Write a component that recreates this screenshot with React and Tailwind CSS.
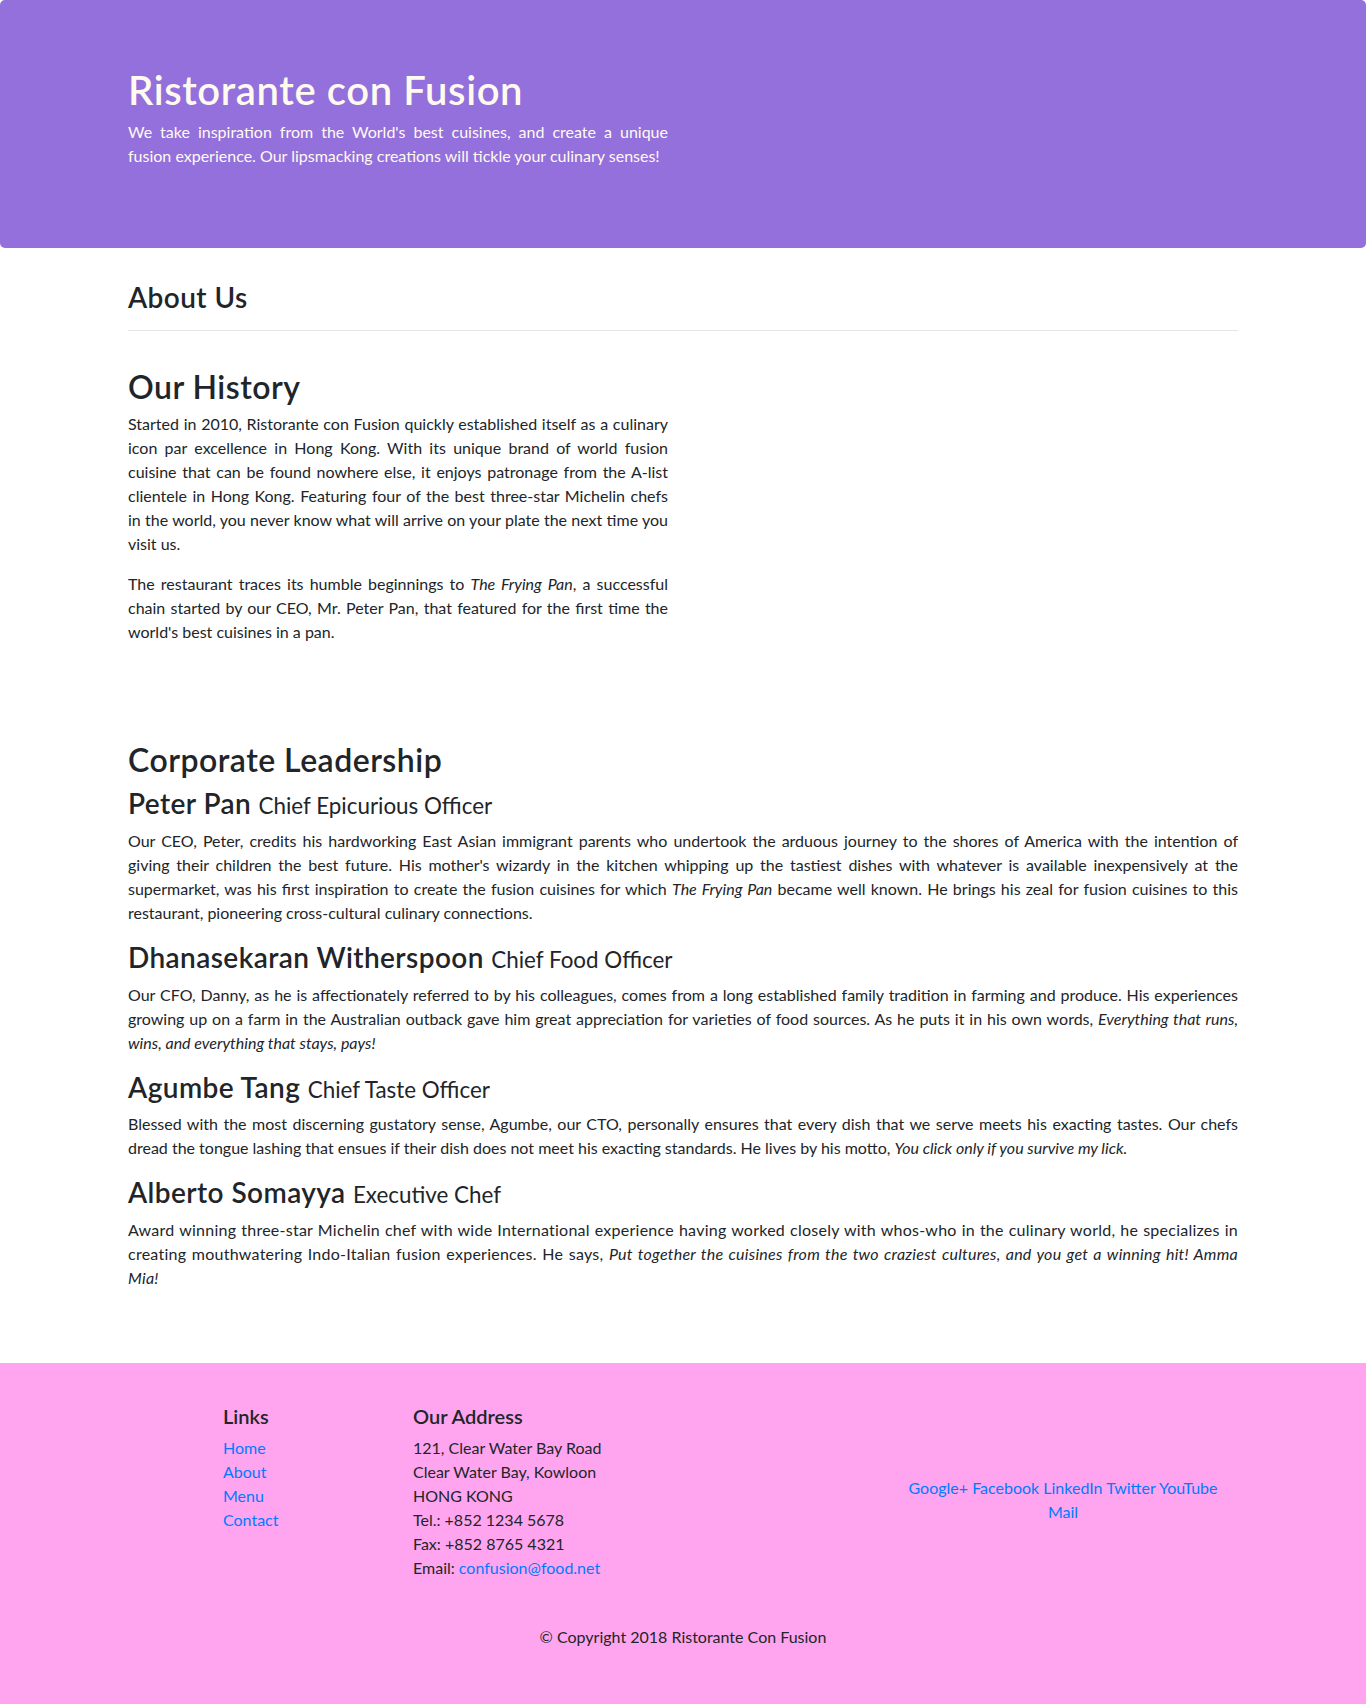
export default function App() {
  const leaders = [
    {
      name: "Peter Pan",
      title: "Chief Epicurious Officer",
      text: (
        <>
          Our CEO, Peter, credits his hardworking East Asian immigrant parents who undertook the arduous journey to the shores of America with the intention of giving their children the best future. His mother's wizardy in the kitchen whipping up the tastiest dishes with whatever is available inexpensively at the supermarket, was his first inspiration to create the fusion cuisines for which <em>The Frying Pan</em> became well known. He brings his zeal for fusion cuisines to this restaurant, pioneering cross-cultural culinary connections.
        </>
      ),
    },
    {
      name: "Dhanasekaran Witherspoon",
      title: "Chief Food Officer",
      text: (
        <>
          Our CFO, Danny, as he is affectionately referred to by his colleagues, comes from a long established family tradition in farming and produce. His experiences growing up on a farm in the Australian outback gave him great appreciation for varieties of food sources. As he puts it in his own words, <em>Everything that runs, wins, and everything that stays, pays!</em>
        </>
      ),
    },
    {
      name: "Agumbe Tang",
      title: "Chief Taste Officer",
      text: (
        <>
          Blessed with the most discerning gustatory sense, Agumbe, our CTO, personally ensures that every dish that we serve meets his exacting tastes. Our chefs dread the tongue lashing that ensues if their dish does not meet his exacting standards. He lives by his motto, <em>You click only if you survive my lick.</em>
        </>
      ),
    },
    {
      name: "Alberto Somayya",
      title: "Executive Chef",
      wide: true,
      text: (
        <>
          Award winning three-star Michelin chef with wide International experience having worked closely with whos-who in the culinary world, he specializes in creating mouthwatering Indo-Italian fusion experiences. He says, <em>Put together the cuisines from the two craziest cultures, and you get a winning hit! Amma Mia!</em>
        </>
      ),
    },
  ];

  return (
    <div className="min-h-screen bg-white text-[#212529] text-base leading-6 font-[Lato,'Noto_Sans',sans-serif]">
      {/* Jumbotron */}
      <header className="bg-[#9370db] text-[#fffaf0] rounded-[5px] py-16 px-8 mb-8">
        <div className="mx-auto w-full max-w-[1140px] px-[15px]">
          <div className="flex flex-wrap -mx-[15px]">
            <div className="w-1/2 px-[15px]">
              <h1 className="text-[40px] leading-[1.2] font-semibold tracking-[0.015em] pt-[2px] mb-[6px]">Ristorante con Fusion</h1>
              <p className="text-justify mb-4">
                We take inspiration from the World's best cuisines, and create a unique fusion experience. Our lipsmacking creations will tickle your culinary senses!
              </p>
            </div>
          </div>
        </div>
      </header>

      <div className="mx-auto w-full max-w-[1140px] px-[15px] pb-[57px]">
        <div className="flex flex-wrap -mx-[15px]">
          <div className="w-full px-[15px]">
            <h3 className="text-[28px] leading-[1.2] font-semibold tracking-[0.015em] pt-[1px]">About Us</h3>
            <hr className="mt-[15px] mb-4 border-0 border-t border-black/10" />
          </div>
        </div>

        <div className="flex flex-wrap -mx-[15px] pt-[19px]">
          <div className="w-1/2 px-[15px]">
            <h2 className="text-[32px] leading-[1.2] font-semibold tracking-[0.015em] pt-[2px] mb-[6px]">Our History</h2>
            <p className="text-justify mb-4">
              Started in 2010, Ristorante con Fusion quickly established itself as a culinary icon par excellence in Hong Kong. With its unique brand of world fusion cuisine that can be found nowhere else, it enjoys patronage from the A-list clientele in Hong Kong. Featuring four of the best three-star Michelin chefs in the world, you never know what will arrive on your plate the next time you visit us.
            </p>
            <p className="text-justify mb-4">
              The restaurant traces its humble beginnings to <em>The Frying Pan</em>, a successful chain started by our CEO, Mr. Peter Pan, that featured for the first time the world's best cuisines in a pan.
            </p>
          </div>
        </div>

        <div className="flex flex-wrap -mx-[15px] pt-[81px]">
          <div className="w-full px-[15px]">
            <h2 className="text-[32px] leading-[1.2] font-semibold tracking-[0.015em] mb-2">Corporate Leadership</h2>
            {leaders.map((l) => (
              <div key={l.name}>
                <h3 className="text-[28px] leading-[1.2] font-semibold tracking-[0.015em] mb-2">
                  {l.name} <small className="text-[80%] font-normal tracking-normal">{l.title}</small>
                </h3>
                <p className={l.wide ? "text-justify mb-4 tracking-[0.25px]" : "text-justify mb-4"}>{l.text}</p>
              </div>
            ))}
          </div>
        </div>
      </div>

      {/* Footer */}
      <footer className="bg-[#ffa5ef] pt-[41px] pb-[40px]">
        <div className="mx-auto w-full max-w-[1140px] px-[15px]">
          <div className="flex flex-wrap -mx-[15px]">
            <div className="ml-[95px] w-[190px] px-[15px]">
              <h5 className="text-xl leading-[1.2] font-semibold mb-2">Links</h5>
              <ul>
                {["Home", "About", "Menu", "Contact"].map((t) => (
                  <li key={t}>
                    <a href="#" className="text-[#007bff]">{t}</a>
                  </li>
                ))}
              </ul>
            </div>
            <div className="w-[475px] px-[15px]">
              <h5 className="text-xl leading-[1.2] font-semibold mb-2">Our Address</h5>
              <address className="not-italic mb-4">
                121, Clear Water Bay Road<br />
                Clear Water Bay, Kowloon<br />
                HONG KONG<br />
                Tel.: +852 1234 5678<br />
                Fax: +852 8765 4321<br />
                Email: <a href="#" className="text-[#007bff]">confusion@food.net</a>
              </address>
            </div>
            <div className="w-[380px] px-[15px] self-center text-center">
              <a href="#" className="text-[#007bff]">Google+</a>{" "}
              <a href="#" className="text-[#007bff]">Facebook</a>{" "}
              <a href="#" className="text-[#007bff]">LinkedIn</a>{" "}
              <a href="#" className="text-[#007bff]">Twitter</a>{" "}
              <a href="#" className="text-[#007bff]">YouTube</a>
              <br />
              <a href="#" className="text-[#007bff]">Mail</a>
            </div>
          </div>
          <div className="flex justify-center pt-[29px]">
            <p className="mb-4">© Copyright 2018 Ristorante Con Fusion</p>
          </div>
        </div>
      </footer>
    </div>
  );
}
